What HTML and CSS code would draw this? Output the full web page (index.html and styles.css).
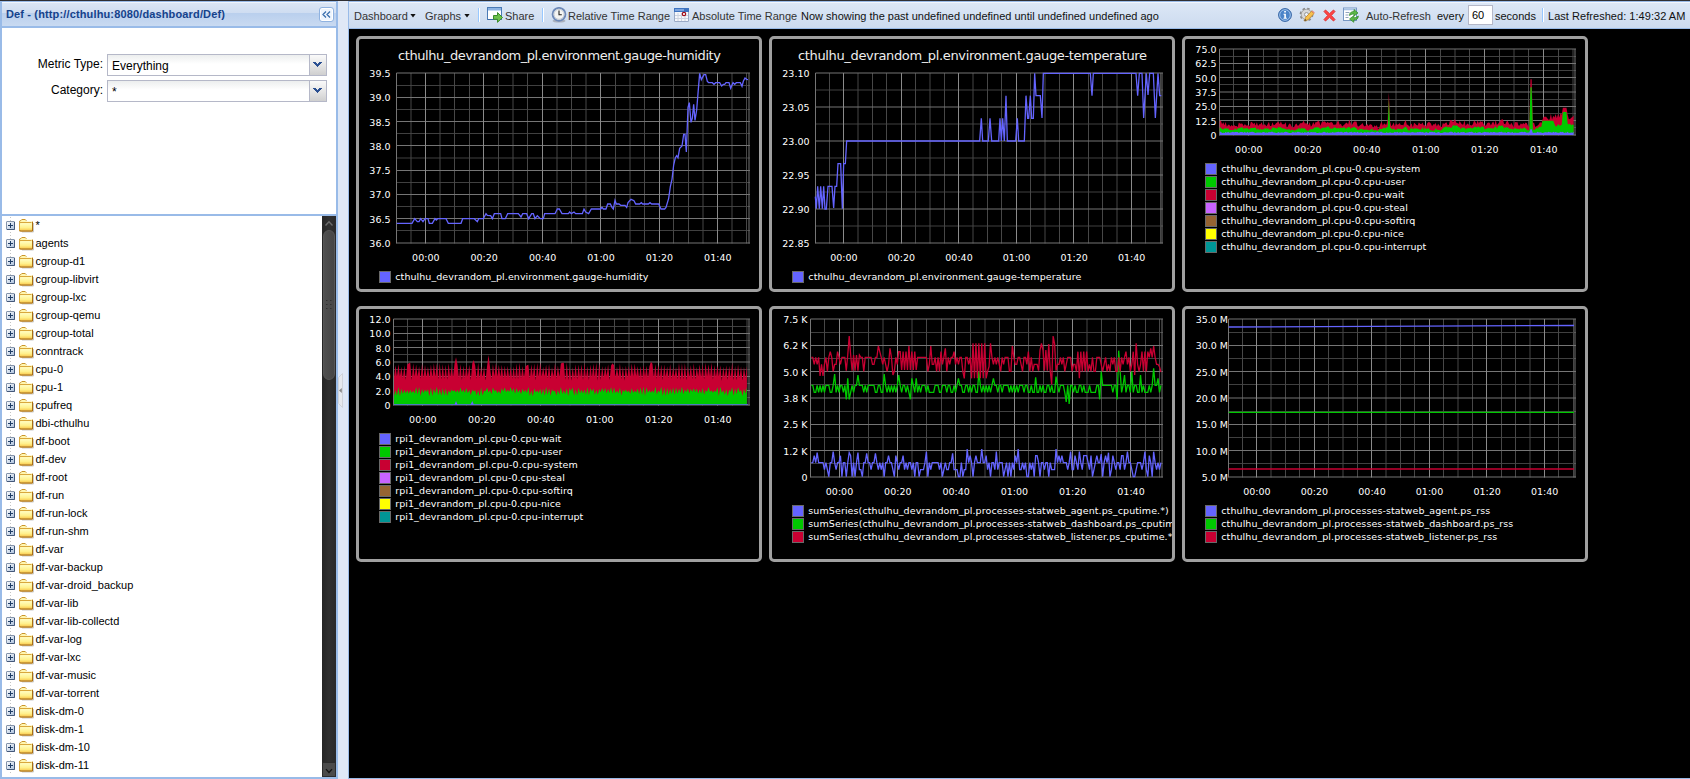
FILE: index.html
```html
<!DOCTYPE html>
<html lang="en">
<head>
<meta charset="utf-8">
<title>Def - Dashboard</title>
<link rel="stylesheet" href="styles.css">
</head>
<body>
<svg class="defs" aria-hidden="true">
  <defs>
    <linearGradient id="fold" x1="0" y1="0" x2="0" y2="1"><stop offset="0" stop-color="#fffdc0"/><stop offset=".6" stop-color="#fff08a"/><stop offset="1" stop-color="#f9c94f"/></linearGradient>
    <linearGradient id="plus" x1="0" y1="0" x2="1" y2="1"><stop offset="0" stop-color="#fff"/><stop offset="1" stop-color="#a9bfdc"/></linearGradient>
    <symbol id="i-folder" viewBox="0 0 16 14">
      <path d="M14.500 4v9H3" fill="none" stroke="#c9c9c9"/>
      <path d="M.5 3.500V2.200L1.800 1.500H2l.8-1h3.400l.8 1h6.500v10.500h-12z" fill="#fff6b0" stroke="#c9952a"/>
      <path d="M7.500 0h7v2.500h-7z" fill="#fff"/>
      <path d="M1 4.500h12v7H1z" fill="url(#fold)"/>
      <path d="M.5 12V3.500h12" fill="none" stroke="#d9a73c"/>
      <path d="M.5 12h13V3" fill="none" stroke="#ab6f12"/>
    </symbol>
    <symbol id="i-plus" viewBox="0 0 9 9">
      <rect x=".5" y=".5" width="8" height="8" rx=".5" fill="url(#plus)" stroke="#8494ab"/>
      <path d="M8.500 1v7.500H1" fill="none" stroke="#44597a"/>
      <path d="M2 4.500h5M4.500 2v5" stroke="#1f3d66"/>
    </symbol>
  </defs>
</svg>
<div class="app">
  <aside class="side">
    <header class="side-head">
      <span class="side-title">Def - (http://cthulhu:8080/dashboard/Def)</span>
      <span class="collapse"><svg width="9" height="7" viewBox="0 0 9 7"><path d="M4 .5l-3 3 3 3M8 .5l-3 3 3 3" fill="none" stroke="#3a6fae" stroke-width="1.300"/></svg></span>
    </header>
    <div class="filters">
      <div class="field"><label>Metric Type:</label><div class="combo"><span>Everything</span><i><svg width="9" height="6" viewBox="0 0 9 6"><path d="M0 0h3v1h1v1h1V1h1V0h3v1H8v1H7v1H6v1H5v1H4V4H3V3H2V2H1V1H0z" fill="#2a4f91"/></svg></i></div></div>
      <div class="field"><label>Category:</label><div class="combo"><span>*</span><i><svg width="9" height="6" viewBox="0 0 9 6"><path d="M0 0h3v1h1v1h1V1h1V0h3v1H8v1H7v1H6v1H5v1H4V4H3V3H2V2H1V1H0z" fill="#2a4f91"/></svg></i></div></div>
    </div>
    <div class="tree-wrap">
      <ul class="tree" id="tree"></ul>
      <div class="scroll">
        <svg class="sb-up" width="14" height="14" viewBox="0 0 14 14"><path d="M3.500 9.500L7 5.700l3.500 3.800" fill="none" stroke="#6b6b6b" stroke-width="1.400"/></svg>
        <div class="thumb"><svg width="6" height="11" viewBox="0 0 6 11"><path d="M0 .5h6M0 4.500h6M0 8.500h6" stroke="#303030" stroke-width="1.200" stroke-dasharray="1.500 2.500"/></svg></div>
        <svg class="sb-down" width="14" height="15" viewBox="0 0 14 15"><path d="M3.500 7L7 11l3.500-4" fill="none" stroke="#111" stroke-width="1.500"/></svg>
      </div>
    </div>
  </aside>
  <div class="split"><svg width="5" height="35" viewBox="0 0 5 35"><path d="M.5 4.500l4-4v34l-4-4z" fill="#e6e9ee" stroke="#cfd3da"/><path d="M3.800 15v5L1 17.500z" fill="#888"/></svg></div>
  <main class="main">
    <nav class="bar">
      <span class="t w-dash">Dashboard</span><b class="caret c1"></b>
      <span class="t w-graphs">Graphs</span><b class="caret c2"></b>
      <b class="sep s1"></b>
      <svg class="ic i1" width="16" height="16" viewBox="0 0 16 16"><rect x=".5" y=".5" width="14" height="12" fill="#fff" stroke="#4a7ab5"/><path d="M1 1h13v2.500H1z" fill="#8db4e4"/><path d="M1 12.500h7" stroke="#3c6aa5"/><path d="M6.500 8.500h4v-3l5 5-5 4.800v-3h-4z" fill="#6cc04a" stroke="#3b8c2a"/></svg>
      <span class="t w-share">Share</span>
      <b class="sep s2"></b>
      <svg class="ic i2" width="16" height="16" viewBox="0 0 16 16"><ellipse cx="8" cy="14" rx="6.500" ry="1.600" fill="#a9b0bd"/><circle cx="8" cy="7.300" r="6.400" fill="#f4f4f2" stroke="#6d89b8" stroke-width="1.900"/><circle cx="8" cy="7.300" r="5" fill="none" stroke="#c5ccd6"/><path d="M8 3.500v4.300h2.800" fill="none" stroke="#222" stroke-width="1.100"/></svg>
      <span class="t w-rel">Relative Time Range</span>
      <svg class="ic i3" width="15" height="14" viewBox="0 0 15 14"><path d="M0 0h15v14H0z" fill="#f5f7fb"/><path d="M.5 3.500v10h14v-10" fill="none" stroke="#9aaac6"/><path d="M0 0h15v4H0z" fill="#3e73c0"/><path d="M1 1h9v2H1z" fill="#7ba3dd"/><path d="M4 5v8M7.500 5v8M11 5v8M1 7.500h13M1 10.500h13" stroke="#ccd3e0"/><circle cx="10" cy="6" r="1.700" fill="#fff" stroke="#a00d1a" stroke-width="1.200"/></svg>
      <span class="t w-abs">Absolute Time Range</span>
      <span class="t k w-now">Now showing the past undefined undefined until undefined undefined ago</span>
      <span class="grow"></span>
      <svg class="ic i4" width="14" height="14" viewBox="0 0 14 14"><circle cx="7" cy="7" r="6.400" fill="#4b84c8" stroke="#3564a3"/><circle cx="7" cy="7" r="5.300" fill="none" stroke="#a9c8ee" stroke-width=".9"/><path d="M6.200 3h1.700v1.500H6.200zM5.500 5.700h2.400v4h.9v1H5.500v-1h.8v-3h-.8z" fill="#fff"/></svg>
      <svg class="ic i5" width="16" height="16" viewBox="0 0 16 16"><circle cx="7.500" cy="7.500" r="5.800" fill="#c9c9c9" stroke="#8b8b8b" stroke-width="2.200" stroke-dasharray="2.400 2.150"/><circle cx="7.500" cy="7.500" r="5.200" fill="#d9d9d9" stroke="#a0a0a0" stroke-width=".8"/><circle cx="7.500" cy="7.500" r="2" fill="#eef3fb" stroke="#999"/><path d="M5.500 14l1-3.500 6-6.200 2.500 2.300-6 6.200z" fill="#f6c14f" stroke="#c98a22" stroke-width=".8"/><path d="M12.500 4.300l1-.9 2.300 2.200-1 1z" fill="#e78a7a"/><path d="M5.500 14l.6-2 1.500 1.300z" fill="#444"/></svg>
      <svg class="ic i6" width="13" height="13" viewBox="0 0 13 13"><path d="M1 2.500L2.500 1l4 3.700L10.500 1 12 2.500 8.300 6.500 12 10.500 10.500 12l-4-3.700L2.500 12 1 10.500l3.700-4z" fill="#ff4545" stroke="#d92a2a" stroke-width=".9" stroke-linejoin="round"/></svg>
      <svg class="ic i7" width="16" height="16" viewBox="0 0 16 16"><rect x=".5" y="1" width="13" height="12.500" fill="#fff" stroke="#7798c4"/><path d="M1 1.500h12v1.800H1z" fill="#a9c4e6"/><path d="M2.500 5.500h4M2.500 8h3M2.500 10.500h3" stroke="#90a4bd"/><path d="M6.500 8.500c0-3 2-4 4.500-4V2.500L15 6l-4 3V7c-1.500 0-2.500.2-4.500 1.500z" fill="#5eb848" stroke="#2d8527" stroke-width=".7"/><path d="M15.300 9c0 3-2 4-4.500 4v2.300L6.500 12l4.300-3.300v2c1.500 0 2.600-.2 4.500-1.700z" fill="#5eb848" stroke="#2d8527" stroke-width=".7"/></svg>
      <span class="t w-auto">Auto-Refresh</span>
      <span class="t k w-every">every</span>
      <span class="num">60</span>
      <span class="t k w-sec">seconds</span>
      <b class="sep s3"></b>
      <span class="t k w-last">Last Refreshed: 1:49:32 AM</span>
    </nav>
    <section class="graphs" id="graphs"></section>
  </main>
</div>
<script src="app.js"></script>
</body>
</html>
```
FILE: styles.css
```css
* { box-sizing: border-box; }
body { margin: 0; background: #2f2f33; font-family: "Liberation Sans", Arial, sans-serif; font-size: 11px; color: #000; overflow: hidden; }
.defs { position: absolute; width: 0; height: 0; }
.app { display: flex; height: 779px; padding-top: 1px; }
.side { width: 338px; flex: none; display: flex; flex-direction: column; border: 2px solid #99bbe8; border-top-width: 1px; background: #fff; }
.side-head { height: 26px; flex: none; display: flex; align-items: center; justify-content: space-between; padding: 0 2px 2px 4px; border-bottom: 2px solid #99bbe8; border-top: 1px solid #f0f5fc; background: linear-gradient(#dbe6f5 0, #cfddf1 42%, #b9cfed 43%, #c9daf1 100%); color: #15428b; font-weight: bold; }
.side-title { white-space: nowrap; letter-spacing: .14px; padding-top: 1px; }
.collapse { width: 15px; height: 15px; display: flex; align-items: center; justify-content: center; border: 1px solid #8fb2e0; border-radius: 3px; background: #eef5fd; margin-top: 2px; box-shadow: inset 0 0 0 1px #fff; }
.filters { height: 188px; flex: none; padding: 26px 0 0; border-bottom: 2px solid #99bbe8; }
.field { display: flex; font-size: 12px; height: 22px; margin-bottom: 4px; }
.field label { width: 101px; text-align: right; padding-top: 3px; line-height: 14px; margin-right: 4px; }
.combo { width: 220px; border: 1px solid #b5b8c8; display: flex; justify-content: space-between; background: linear-gradient(#eceeee, #fff 9px); }
.combo span { padding: 4px 0 0 4px; line-height: 14px; }
.combo i { width: 17px; display: flex; justify-content: center; padding: 7px 1px 0 0; border-left: 1px solid #b5b8c8; background: linear-gradient(#fafafa, #e6e6e6 50%, #cfcfcf); }
.tree-wrap { flex: 1; display: flex; min-height: 0; }
.tree { flex: 1; margin: 0; padding: 0 0 0 4px; list-style: none; }
.tree li { height: 18px; display: flex; align-items: center; background: radial-gradient(#c4c4c4 .7px, transparent .8px) 3px 0 / 3px 3px repeat-y; }
.tree .p { width: 9px; height: 9px; margin: 1px 4px 0 0; }
.tree .f { width: 16px; height: 14px; margin: 1px .5px 0 0; }
.tree li svg { flex: none; }
.scroll { width: 14px; background: linear-gradient(90deg, #262626, #303030 50%, #2a2a2a); display: flex; flex-direction: column; }
.scroll svg { flex: none; display: block; }
.thumb { height: 150px; border-radius: 7px; margin: 0 1px; background: linear-gradient(90deg, #505050, #464646); border: 1px solid #575757; display: flex; align-items: center; justify-content: center; }
.sb-down { margin-top: auto; background: #4a4a4a; border: 1px solid #2b2b2b; }
.split { width: 10px; flex: none; background: #dfe8f6; display: flex; align-items: center; }
.main { flex: 1; min-width: 0; border: 1px solid #99bbe8; border-right: 0; background: #000; }
.bar { height: 27px; display: flex; align-items: center; padding: 0 0 1px 5px; border-top: 1px solid #f2f6fc; border-bottom: 1px solid #99bbe8; background: linear-gradient(#dce7f6, #ccdbef); white-space: nowrap; color: #333; }
.bar > * { flex: none; }
.bar .grow { flex: 1; }
.t { line-height: 14px; padding-top: 1px; }
.k { color: #111; }
.caret { width: 6px; height: 4px; background: #111; clip-path: polygon(0 0, 100% 0, 50% 100%); margin-top: 1px; }
.c1 { margin-right: 9px; }
.c2 { margin-right: 8px; }
.sep { width: 2px; height: 14px; background: linear-gradient(90deg, #98c8ff 50%, #fff 50%); }
.ic { display: block; }
.w-dash { width: 56px; } .w-graphs { width: 39px; } .w-share { width: 37px; }
.s1 { margin-right: 7px; } .i1 { margin-right: 2px; } .s2 { margin-right: 7px; }
.i2 { margin-right: 1px; } .w-rel { width: 106px; } .i3 { margin-right: 3px; }
.w-abs { width: 109px; }
.i4 { margin-right: 7px; } .i5 { margin-right: 8px; } .i6 { margin-right: 7px; } .i7 { margin-right: 7px; }
.w-auto { width: 71px; } .w-every { width: 31px; }
.num { width: 25px; height: 20px; border: 1px solid #b5b8c8; background: #fff; line-height: 19px; padding-left: 3px; font-size: 11px; color: #000; margin-right: 2px; }
.w-sec { width: 47px; } .s3 { margin-right: 4px; } .w-last { width: 142px; letter-spacing: .04px; }
.graphs { padding: 7px 0 0 7px; display: grid; grid-template-columns: repeat(3, 406px); grid-auto-rows: 256px; gap: 14px 7px; }
.card { border: 3px solid #a0a0a0; border-radius: 5px; background: #000; overflow: hidden; }
.card svg { display: block; }
.card text { font-family: "DejaVu Sans", sans-serif; font-size: 9.500px; fill: #fff; }
.card .title { font-size: 13px; fill: #eee; }
```
FILE: app.js
```js
const names = ['*','agents','cgroup-d1','cgroup-libvirt','cgroup-lxc','cgroup-qemu','cgroup-total','conntrack','cpu-0','cpu-1','cpufreq','dbi-cthulhu','df-boot','df-dev','df-root','df-run','df-run-lock','df-run-shm','df-var','df-var-backup','df-var-droid_backup','df-var-lib','df-var-lib-collectd','df-var-log','df-var-lxc','df-var-music','df-var-torrent','disk-dm-0','disk-dm-1','disk-dm-10','disk-dm-11'];
document.getElementById('tree').innerHTML = names.map(n =>
  `<li><svg class="p"><use href="#i-plus"/></svg><svg class="f"><use href="#i-folder"/></svg><span>${n}</span></li>`).join('');

const BLUE = '#6464ff', GREEN = '#00c800', RED = '#c80032';
const PALETTE = [BLUE, GREEN, RED, '#c864ff', '#966432', '#ffff00', '#009696'];

// Small seeded generator so that the noise is stable between loads.
function rng(seed) {
  return () => { seed = (seed * 1664525 + 1013904223) >>> 0; return seed / 4294967296; };
}
const pick = (r, table) => { let v = r(); for (const [p, y] of table) { if ((v -= p) < 0) return y; } return table[0][1]; };

// Series coordinates are kept in thirds of a pixel; ox is the left offset of the plot in those units.
const pts = (a, ox) => a.map(([x, y]) => ((x - ox) / 3).toFixed(2) + ',' + ((y - 27) / 3).toFixed(2)).join(' ');
const line = (a, ox, c) => `<polyline points="${pts(a, ox)}" fill="none" stroke="${c}" stroke-width="1.300" stroke-linejoin="miter"/>`;
const area = (a, ox, c) => `<polygon points="${pts([[a[0][0], 315], ...a, [a[a.length - 1][0], 315]], ox)}" fill="${c}"/>`;

function grid(g) {
  let s = '';
  const snap = (v, minor) => (Math.abs(v - Math.round(v)) < (minor ? 0.110 : 0.001)) ? Math.round(v) : Math.floor(v) + 0.5;
  const v = (x, c) => `<path d="M${x} ${g.top}V${g.bottom + .5}" stroke="${c}"/>`;
  const h = (y, c) => `<path d="M${g.left} ${y}H391" stroke="${c}"/>`;
  const step = (g.bottom - g.top) / (g.y.length - 1);
  for (let i = 0; i < g.y.length - 1; i++) s += h(snap(g.top + step * (i + .5)), '#404040');
  for (let i = -1; i < 24; i++) {
    const x = g.x0 + g.dx * i / 4;
    if (i % 4 && x < 390) s += v(snap(x, true), '#474747');
  }
  for (let i = 0; i < g.y.length; i++) s += h(snap(g.top + step * i), '#757575');
  for (let i = 0; i < 6; i++) s += v(Math.floor(g.x0 + g.dx * i) + .5, '#8a8a8a');
  return s + v(g.left, '#757575') + v(390, '#757575');
}

function chart(g) {
  let s = grid(g) + g.series;
  const step = (g.bottom - g.top) / (g.y.length - 1);
  if (g.title) s += `<text class="title" x="${g.title[1]}" y="21" textLength="${g.title[2]}">${g.title[0]}</text>`;
  g.y.forEach((t, i) => s += `<text x="${g.yr + .5}" y="${(g.top + step * i + 4).toFixed(1)}" text-anchor="end">${t}</text>`);
  ['00:00', '00:20', '00:40', '01:00', '01:20', '01:40'].forEach((t, i) =>
    s += `<text x="${(g.x0 + g.dx * i + .3).toFixed(1)}" y="${g.bottom + 18}" text-anchor="middle">${t}</text>`);
  g.legend.forEach(([t, w], i) => {
    const y = g.ly + 13 * i;
    s += `<rect x="20.500" y="${y + .5}" width="11" height="11" fill="${PALETTE[i]}" stroke="#696969"/>`;
    s += `<text x="36.300" y="${y + 9}" textLength="${w}">${t}</text>`;
  });
  return `<div class="card"><svg width="400" height="250" viewBox="0 0 400 250">${s}</svg></div>`;
}

/* Humidity */
const humidity = [[140,580],[186,580],[194,566],[202,575],[207,575],[212,566],[219,575],[225,566],[234,566],[238,580],[247,580],[255,566],[259,570],[263,566],[288,566],[295,580],[333,580],[338,566],[373,566],[382,575],[386,566],[400,566],[408,551],[412,556],[422,557],[427,566],[433,551],[452,551],[456,566],[466,566],[473,551],[505,551],[513,561],[518,551],[530,551],[536,566],[545,551],[550,551],[555,566],[562,557],[571,566],[580,566],[584,551],[615,551],[622,537],[628,537],[636,551],[655,551],[659,546],[664,551],[672,546],[677,551],[697,551],[702,537],[707,546],[716,551],[724,537],[752,537],[756,532],[760,537],[768,537],[773,522],[781,522],[786,532],[790,537],[795,511],[799,522],[807,522],[812,526],[825,526],[830,532],[834,518],[843,508],[852,512],[857,522],[869,522],[874,518],[878,522],[895,522],[900,518],[905,522],[926,522],[933,537],[944,537],[948,532],[956,505],[961,470],[966,448],[971,405],[976,383],[980,377],[984,383],[989,355],[996,348],[1001,313],[1005,313],[1009,366],[1014,232],[1018,218],[1023,277],[1027,265],[1031,223],[1035,271],[1040,240],[1045,178],[1049,130],[1054,149],[1062,134],[1067,134],[1072,154],[1076,158],[1087,158],[1092,163],[1097,158],[1109,158],[1115,168],[1120,163],[1124,163],[1128,158],[1137,158],[1142,175],[1149,158],[1154,163],[1159,158],[1171,158],[1176,169],[1180,154],[1185,144],[1190,148],[1194,149]];

/* Temperature */
const temperature = [[166,500],[169,536],[173,469],[178,536],[182,469],[187,536],[191,469],[195,537],[199,537],[204,469],[216,469],[221,534],[225,469],[230,469],[234,401],[242,401],[247,536],[251,401],[256,401],[260,333],[659,333],[664,265],[668,333],[685,333],[690,265],[695,333],[716,333],[720,265],[724,333],[728,265],[733,333],[738,197],[742,333],[767,333],[772,265],[776,333],[793,333],[798,197],[803,265],[806,265],[811,197],[815,265],[820,265],[824,130],[828,197],[841,197],[846,264],[850,130],[991,130],[996,197],[1000,130],[1128,130],[1133,197],[1138,130],[1146,130],[1151,264],[1159,130],[1164,195],[1169,130],[1180,130],[1186,264],[1194,130],[1199,197],[1204,197]];

/* CPU of cthulhu, stacked */
function cpuCthulhu() {
  const r = rng(42), b = [], g = [], d = [];
  let k = 0;
  for (let x = 134; x <= 1197; x += 3.600) {
    k = k * .75 + (r() - .5) * 8;
    let yb = 307 + (r() - .5) * 4, yg = 295 + k + (r() - .5) * 5, yr = 281 + k * 1.300 + (r() - .5) * 16;
    if (x > 1102) { yg = 284 + (r() - .5) * 12; yr = 262 + (r() - .5) * 24; if (x < 1135) yg = 272; }
    if (x > 1163 && x < 1177) { yg = 246; yr = 233; }
    if (Math.abs(x - 643) < 1.900) { yg = 205; yr = 187; }
    if (Math.abs(x - 1069) < 3.600) { yg = 172; yr = 148; yb = 298; }
    b.push([x, yb]); g.push([x, Math.min(yg, yb - 3)]); d.push([x, Math.min(yr, yg - 3)]);
  }
  return area(d, 30, RED) + area(g, 30, GREEN) + area(b, 30, BLUE);
}

/* CPU of rpi1, stacked */
function cpuRpi() {
  const r = rng(7), g = [], d = [];
  const peaks = [[318,172],[415,165],[370,180],[250,190],[640,187],[902,185],[175,190],[298,190],[788,190],[532,196]];
  let i = 0;
  for (let x = 132; x <= 1194; x += 4.430, i++) {
    let yr = i % 2 ? 187 + r() * 14 : 228 + r() * 14;
    for (const [px, py] of peaks) if (Math.abs(px - x) < 2.300) yr = py;
    if (x > 634 && x < 645) yr = 188;
    g.push([x, i % 2 ? 260 + r() * 12 : 274 + r() * 15]); d.push([x, yr]);
  }
  const b = [[132,313],[314,313],[318,303],[322,313],[362,313],[367,303],[371,313],[1194,313]];
  return area(d, 27, RED) + area(g, 27, GREEN) + area(b, 27, BLUE);
}

/* Process CPU time, quantised levels with known spikes */
function noisy(seed, table, spikes, bursts = []) {
  const r = rng(seed), a = [];
  let last = table[0][1], i = 0;
  for (let x = 154; x <= 1203; x += 4.370, i++) {
    let y = pick(r, table);
    if (y === last && r() < .3) y = pick(r, table);
    last = y;
    for (const [from, to, hi, lo] of bursts) if (x > from && x < to) y = i % 2 ? hi : lo;
    for (const [sx, sy] of spikes) if (Math.abs(sx - x) < 2.200) y = sy;
    a.push([x, y]);
  }
  return a;
}
const cpuTime =
  line(noisy(11, [[.40,488],[.26,509],[.13,530],[.11,467],[.10,488]], [[171,458],[218,455],[267,458],[293,458],[318,460],[346,460],[408,467],[500,455],[578,460],[621,447],[665,447],[708,455],[774,447],[888,447],[932,455],[956,455],[1023,462],[1046,458],[1102,455],[1155,455],[1181,455]]), 36, BLUE) +
  line(noisy(23, [[.58,256],[.42,277]], [[223,222],[258,298],[262,235],[267,298],[293,225],[371,222],[416,225],[451,298],[455,235],[468,235],[595,235],[655,215],[700,235],[826,232],[888,230],[920,306],[928,312],[1022,215],[1018,298],[1075,152],[1071,298],[1079,215],[1092,225],[1116,215],[1143,225],[1181,205],[1193,235]]), 36, GREEN) +
  line(noisy(5, [[.46,172],[.28,193],[.20,214],[.06,155]], [[180,228],[188,228],[267,108],[354,138],[398,225],[389,145],[446,138],[512,138],[557,145],[615,235],[757,138],[845,130],[878,108],[874,253],[958,235],[1128,130],[1124,225],[1171,145],[1181,138],[1190,193],[1194,193],[1198,200],[1203,216]], [[255,300,165,212],[420,470,155,210],[634,680,130,235],[684,692,130,200],[832,858,150,212],[858,890,132,212],[950,980,155,214]]), 36, RED);

const cpuLabels = (host, list) => list.map(([n, w]) => [`${host}_devrandom_pl.cpu-0.cpu-${n}`, w]);

document.getElementById('graphs').innerHTML = [
  { title: ['cthulhu_devrandom_pl.environment.gauge-humidity', 39, 323], left: 37.5, top: 34, bottom: 204, x0: 66.5, dx: 58.4, yr: 31,
    y: ['39.5','39.0','38.5','38.0','37.5','37.0','36.5','36.0'], ly: 232, series: line(humidity, 27, BLUE),
    legend: [['cthulhu_devrandom_pl.environment.gauge-humidity', 253]] },
  { title: ['cthulhu_devrandom_pl.environment.gauge-temperature', 26, 349], left: 43.5, top: 34, bottom: 204, x0: 71.6, dx: 57.55, yr: 37,
    y: ['23.10','23.05','23.00','22.95','22.90','22.85'], ly: 232, series: line(temperature, 36, BLUE),
    legend: [['cthulhu_devrandom_pl.environment.gauge-temperature', 273]] },
  { left: 34.5, top: 10, bottom: 96, x0: 63.5, dx: 59, yr: 31, y: ['75.0','62.5','50.0','37.5','25.0','12.5','0'], ly: 124, series: cpuCthulhu(),
    legend: cpuLabels('cthulhu', [['system',199],['user',184],['wait',183],['steal',186.5],['softirq',194],['nice',182.5],['interrupt',205]]) },
  { left: 34.5, top: 10, bottom: 96, x0: 63.5, dx: 59, yr: 31, y: ['12.0','10.0','8.0','6.0','4.0','2.0','0'], ly: 124, series: cpuRpi(),
    legend: cpuLabels('rpi1', [['wait',166],['user',167],['system',182.5],['steal',169.5],['softirq',177.5],['nice',165.5],['interrupt',188]]) },
  { left: 38.5, top: 10, bottom: 168, x0: 67.2, dx: 58.3, yr: 35, y: ['7.5 K','6.2 K','5.0 K','3.8 K','2.5 K','1.2 K','0'], ly: 196, series: cpuTime,
    legend: [['sumSeries(cthulhu_devrandom_pl.processes-statweb_agent.ps_cputime.*)',360.5],['sumSeries(cthulhu_devrandom_pl.processes-statweb_dashboard.ps_cputime.*)',384],['sumSeries(cthulhu_devrandom_pl.processes-statweb_listener.ps_cputime.*)',368]] },
  { left: 43.5, top: 10, bottom: 168, x0: 71.6, dx: 57.55, yr: 42.5, y: ['35.0 M','30.0 M','25.0 M','20.0 M','15.0 M','10.0 M','5.0 M'], ly: 196,
    series: line([[161,81],[1197,76.5]], 30, BLUE) + line([[161,337],[1197,337]], 30, GREEN) + line([[161,507],[1197,507]], 30, RED),
    legend: [['cthulhu_devrandom_pl.processes-statweb_agent.ps_rss',269],['cthulhu_devrandom_pl.processes-statweb_dashboard.ps_rss',292],['cthulhu_devrandom_pl.processes-statweb_listener.ps_rss',276]] }
].map(chart).join('');
```
